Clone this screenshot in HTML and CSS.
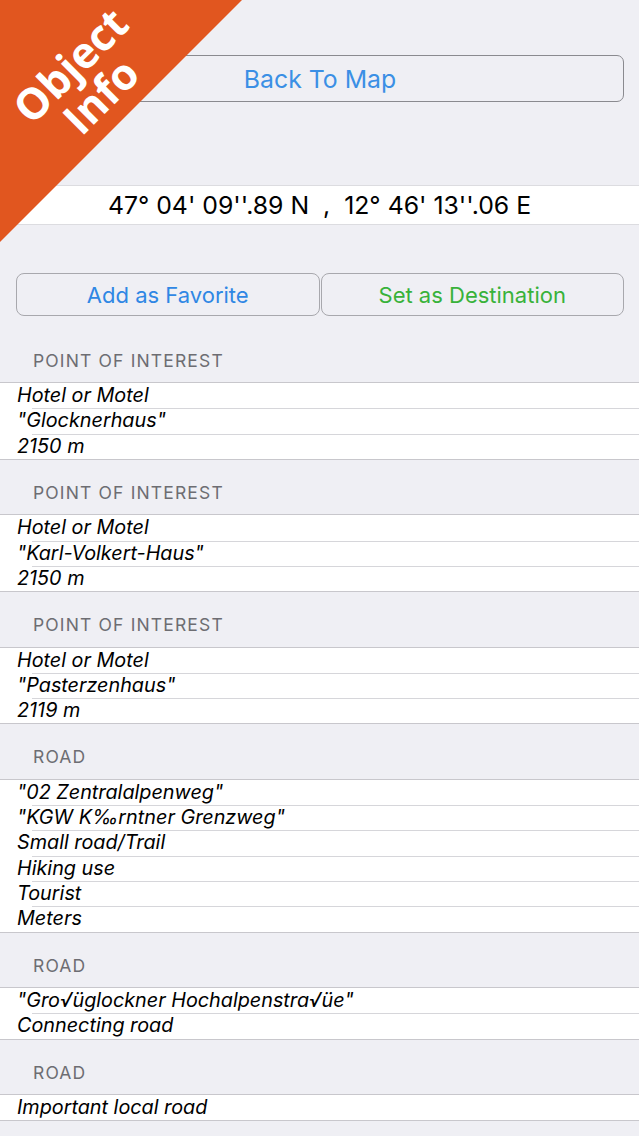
FILE: index.html
```html
<!DOCTYPE html>
<html>
<head>
<meta charset="utf-8">
<link rel="stylesheet" href="styles.css">
</head>
<body>
<div class="page">
  <div class="top-pad">
    <button class="btn back">Back To Map</button>
  </div>
  <div class="coords">47° 04' 09''.89 N &nbsp;, &nbsp;12° 46' 13''.06 E</div>
  <div class="actions">
    <button class="btn fav">Add as Favorite</button>
    <button class="btn dest">Set as Destination</button>
  </div>

  <div class="header">POINT OF INTEREST</div>
  <div class="group">
    <div class="row">Hotel or Motel</div>
    <div class="row">"Glocknerhaus"</div>
    <div class="row">2150 m</div>
  </div>

  <div class="header">POINT OF INTEREST</div>
  <div class="group">
    <div class="row">Hotel or Motel</div>
    <div class="row">"Karl-Volkert-Haus"</div>
    <div class="row">2150 m</div>
  </div>

  <div class="header">POINT OF INTEREST</div>
  <div class="group">
    <div class="row">Hotel or Motel</div>
    <div class="row">"Pasterzenhaus"</div>
    <div class="row">2119 m</div>
  </div>

  <div class="header">ROAD</div>
  <div class="group">
    <div class="row">"02 Zentralalpenweg"</div>
    <div class="row">"KGW K‰rntner Grenzweg"</div>
    <div class="row">Small road/Trail</div>
    <div class="row">Hiking use</div>
    <div class="row">Tourist</div>
    <div class="row">Meters</div>
  </div>

  <div class="header">ROAD</div>
  <div class="group">
    <div class="row">"Gro√üglockner Hochalpenstra√üe"</div>
    <div class="row">Connecting road</div>
  </div>

  <div class="header">ROAD</div>
  <div class="group">
    <div class="row">Important local road</div>
  </div>

  <div class="banner">
    <div class="banner-text">Object<br>Info</div>
  </div>
</div>
</body>
</html>
```
FILE: styles.css
```css
html, body {
  margin: 0;
  padding: 0;
  background: #efeff4;
}
body {
  font-family: Inter, "Liberation Sans", Arial, sans-serif;
  width: 639px;
  height: 1136px;
  overflow: hidden;
}
.page {
  position: relative;
  display: flex;
  flex-direction: column;
}
.top-pad {
  padding: 55px 15px 0 16px;
}
.btn {
  font-family: Inter, "Liberation Sans", Arial, sans-serif;
  background: transparent;
  cursor: pointer;
  padding: 0;
}
.back {
  width: 100%;
  height: 47px;
  border: 1.5px solid #8a8a8f;
  border-radius: 7px;
  color: #3b8fe5;
  font-size: 24.8px;
}
.coords {
  margin-top: 83px;
  height: 38px;
  background: #fff;
  border-top: 1px solid #dcdce0;
  border-bottom: 1px solid #dcdce0;
  display: flex;
  align-items: center;
  justify-content: center;
  font-size: 24.8px;
  color: #000;
}
.actions {
  margin-top: 48px;
  padding: 0 15px 0 16px;
  display: flex;
  gap: 1px;
}
.actions .btn {
  flex: 1;
  height: 43px;
  border: 1px solid #a8a8ad;
  border-radius: 8px;
  font-size: 22px;
}
.fav { color: #2f87e4; }
.dest { color: #38b23a; }
.header {
  height: 56.4px;
  box-sizing: border-box;
  padding: 22px 0 0 33px;
  font-size: 17.5px;
  letter-spacing: 1.15px;
  color: #6d6d72;
  line-height: 24px;
}
.actions + .header {
  height: 67px;
  padding-top: 33px;
}
.group {
  background: #fff;
  box-shadow: 0 -1px 0 #c8c7cc, 0 1px 0 #c8c7cc;
}
.row {
  position: relative;
  height: 25.3px;
  line-height: 25px;
  padding-left: 17px;
  font-size: 19.8px;
  font-style: italic;
  color: #000;
}
.row + .row::before {
  content: "";
  position: absolute;
  top: 0;
  left: 32px;
  right: 0;
  height: 1px;
  background: #d6d6da;
}
.banner {
  position: absolute;
  left: 0;
  top: 0;
  width: 242px;
  height: 242px;
  background: #e1561f;
  clip-path: polygon(0 0, 100% 0, 0 100%);
}
.banner-text {
  position: absolute;
  left: -15px;
  top: 37px;
  width: 200px;
  height: 86px;
  text-align: center;
  transform: rotate(-45deg);
  transform-origin: 50% 50%;
  color: #fff;
  font-family: "Open Sans", sans-serif;
  font-weight: 700;
  font-size: 43px;
  line-height: 43px;
}
```
